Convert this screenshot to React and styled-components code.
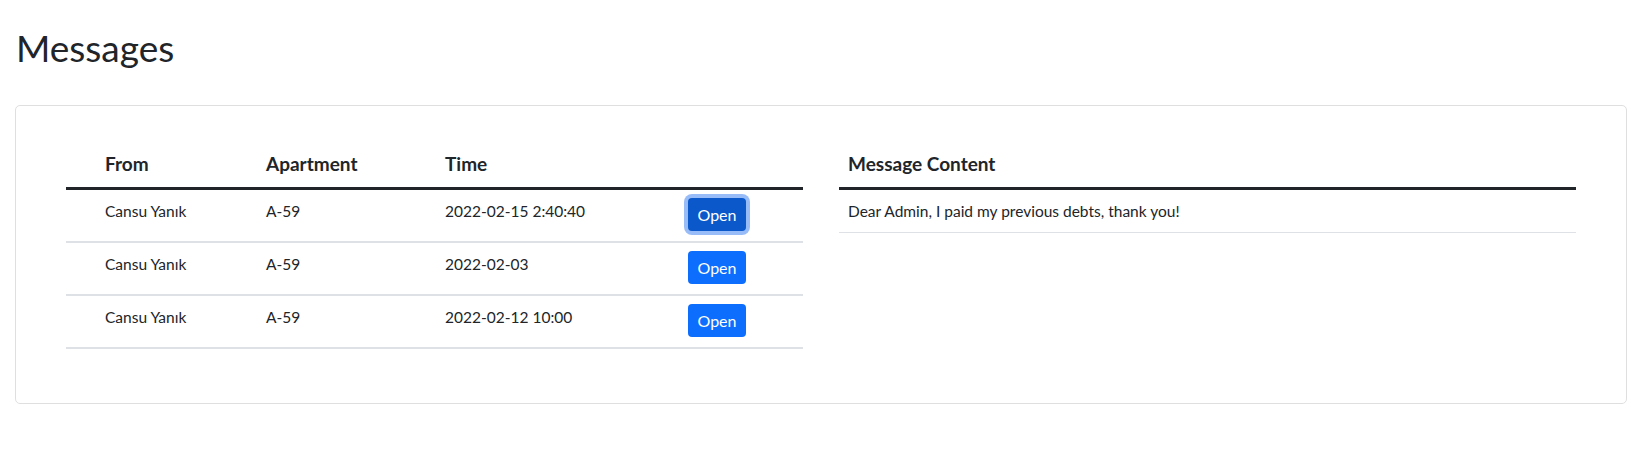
import React from "react";
import styled, { createGlobalStyle } from "styled-components";

const Global = createGlobalStyle`
  * { box-sizing: border-box; }
  body {
    margin: 0;
    background: #fff;
    color: #212529;
    font-family: Lato, "Noto Sans", sans-serif;
    font-size: 16px;
  }
`;

const Page = styled.div`
  padding: 24px 12px 0 15px;
`;

const Title = styled.h1`
  margin: 0 0 33px 0;
  padding-left: 1px;
  font-size: 37px;
  font-weight: 400;
  line-height: 48px;
  color: #212529;
`;

const Card = styled.div`
  border: 1px solid #dfdfdf;
  border-radius: 5px;
  padding: 35px 50px 54px 50px;
  display: grid;
  grid-template-columns: 1fr 1fr;
  gap: 36px;
  align-items: start;
`;

const Table = styled.div`
  display: flex;
  flex-direction: column;
`;

const Row = styled.div`
  display: grid;
  grid-template-columns: ${(p) => p.$cols};
  align-items: start;
  border-bottom: ${(p) => p.$border};
  min-height: ${(p) => p.$h || "auto"};
`;

const Th = styled.div`
  padding: 9px 9px 9px 9px;
  font-size: 19px;
  font-weight: 700;
  line-height: 28px;
`;

const Td = styled.div`
  padding: 9px 9px;
  font-size: 15.5px;
  line-height: 24px;
  white-space: nowrap;
`;

const BtnCell = styled.div`
  padding: 8px 9px;
`;

const OpenButton = styled.button`
  font-family: inherit;
  font-size: 16px;
  line-height: 22px;
  height: 33px;
  width: 58px;
  padding: 0;
  border: none;
  border-radius: 4px;
  color: #fff;
  background: ${(p) => (p.$active ? "#0a58ca" : "#0d6efd")};
  box-shadow: ${(p) => (p.$active ? "0 0 0 4px #98bcf8" : "none")};
  cursor: pointer;
`;

const LEFT_COLS = "30px 161px 179px 243px 1fr";

const messages = [
  { from: "Cansu Yanık", apt: "A-59", time: "2022-02-15 2:40:40", active: true },
  { from: "Cansu Yanık", apt: "A-59", time: "2022-02-03" },
  { from: "Cansu Yanık", apt: "A-59", time: "2022-02-12 10:00" },
];

export default function App() {
  return (
    <>
      <Global />
      <Page>
        <Title>Messages</Title>
        <Card>
          <Table>
            <Row $cols={LEFT_COLS} $border="3px solid #212529">
              <Th />
              <Th>From</Th>
              <Th>Apartment</Th>
              <Th>Time</Th>
              <Th />
            </Row>
            {messages.map((m, i) => (
              <Row key={i} $cols={LEFT_COLS} $border="2px solid #dee2e6" $h="53px">
                <Td />
                <Td>{m.from}</Td>
                <Td>{m.apt}</Td>
                <Td>{m.time}</Td>
                <BtnCell>
                  <OpenButton $active={m.active}>Open</OpenButton>
                </BtnCell>
              </Row>
            ))}
          </Table>
          <Table>
            <Row $cols="1fr" $border="3px solid #212529">
              <Th>Message Content</Th>
            </Row>
            <Row $cols="1fr" $border="1px solid #dee2e6">
              <Td>Dear Admin, I paid my previous debts, thank you!</Td>
            </Row>
          </Table>
        </Card>
      </Page>
    </>
  );
}
